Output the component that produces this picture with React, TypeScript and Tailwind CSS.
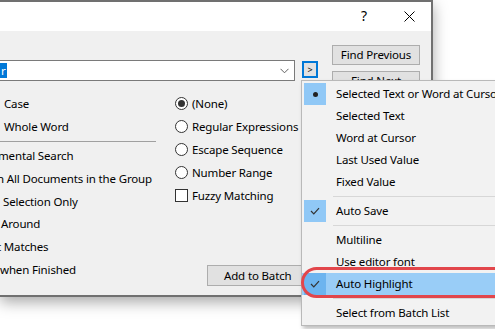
import React from 'react';

const Radio = ({ checked }: { checked?: boolean }) => (
  <span className="w-[13px] h-[13px] rounded-full border border-[#333] bg-white flex items-center justify-center shrink-0">
    {checked && <span className="w-[7px] h-[7px] rounded-full bg-[#333]" />}
  </span>
);

const Check = () => (
  <svg width="10" height="8" viewBox="0 0 10 8">
    <path d="M1 4 L3.8 6.8 L9 1.2" fill="none" stroke="#333" strokeWidth="1.2" />
  </svg>
);

const MenuItem = ({
  label,
  mark,
  hover,
}: {
  label: string;
  mark?: 'dot' | 'check';
  hover?: boolean;
}) => (
  <div className={`h-[22px] flex items-center ${hover ? 'bg-[#99cdf7]' : ''}`}>
    <div
      className={`w-[22px] h-[22px] ml-[2px] flex items-center justify-center ${
        mark ? (hover ? 'bg-[#6cb4ef]' : 'bg-[#90c8f6]') : ''
      }`}
    >
      {mark === 'dot' && <span className="w-[5px] h-[5px] rounded-full bg-[#222]" />}
      {mark === 'check' && <Check />}
    </div>
    <span className="ml-[10px] whitespace-nowrap">{label}</span>
  </div>
);

const Sep = () => (
  <div className="h-[7px] flex items-center pl-[31px]">
    <div className="h-px flex-1 bg-[#d7d7d7]" />
  </div>
);

export default function App() {
  return (
    <div className="relative w-[495px] h-[329px] bg-white overflow-hidden font-['Noto_Sans',sans-serif] text-[11.5px] tracking-[-0.15px] text-black">
      {/* Dialog */}
      <div className="w-[433px] h-[297px] flex flex-col border-t-2 border-r-2 border-b-2 border-[#707070] shadow-[0_5px_14px_rgba(0,0,0,0.35)]">
        {/* Title bar */}
        <div className="h-[29px] bg-white flex items-center justify-end">
          <span className="text-[14px] mr-[37px] mt-[-2px]">?</span>
          <svg width="11" height="11" viewBox="0 0 11 11" className="mr-[16px]">
            <path d="M0.5 0.5 L10.5 10.5 M10.5 0.5 L0.5 10.5" stroke="#000" strokeWidth="1" />
          </svg>
        </div>

        {/* Client area */}
        <div className="flex-1 bg-[#f0f0f0] flex">
          <div className="w-[320px] pt-[29px] flex flex-col">
            {/* Combo row */}
            <div className="flex items-start">
              <div className="w-[295px] h-[21px] bg-white border-y border-r border-[#7a7a7a] flex items-center">
                <span className="bg-[#0078d7] text-white h-[15px] leading-[15px] px-[1px]">r</span>
                <div className="flex-1" />
                <svg width="9" height="6" viewBox="0 0 9 6" className="mr-[5px]">
                  <path d="M0.5 0.8 L4.5 4.8 L8.5 0.8" fill="none" stroke="#606060" strokeWidth="1" />
                </svg>
              </div>
              <div className="ml-[7px] mt-px w-[16px] h-[17px] border-2 border-[#0078d7] bg-[#e1e1e1] flex items-center justify-center text-[9px] leading-none">
                &gt;
              </div>
            </div>

            {/* Options */}
            <div className="flex mt-[11px]">
              <div className="w-[175px] flex flex-col">
                <div className="h-[23px] flex items-center pl-[4px]">Case</div>
                <div className="h-[23px] flex items-center pl-[4px]">Whole Word</div>
                <div className="h-[7px] flex items-center">
                  <div className="w-[156px] h-px bg-[#a0a0a0]" />
                </div>
                <div className="h-[22px] flex items-center whitespace-nowrap">
                  <span className="-ml-[2px]">mental Search</span>
                </div>
                <div className="h-[23px] flex items-center whitespace-nowrap">
                  <span className="-ml-[3px]">n All Documents in the Group</span>
                </div>
                <div className="h-[23px] flex items-center pl-[3px]">Selection Only</div>
                <div className="h-[22px] flex items-center pl-px">Around</div>
                <div className="h-[23px] flex items-center whitespace-nowrap">
                  <span className="-ml-[3px]">t Matches</span>
                </div>
                <div className="h-[23px] flex items-center">when Finished</div>
              </div>

              <div className="flex-1 flex flex-col">
                {[
                  { label: '(None)', checked: true },
                  { label: 'Regular Expressions' },
                  { label: 'Escape Sequence' },
                  { label: 'Number Range' },
                ].map((r) => (
                  <div key={r.label} className="h-[23px] flex items-center gap-[4px]">
                    <Radio checked={r.checked} />
                    <span className="whitespace-nowrap">{r.label}</span>
                  </div>
                ))}
                <div className="h-[23px] flex items-center gap-[4px]">
                  <span className="w-[13px] h-[13px] border border-[#333] bg-white shrink-0" />
                  <span className="whitespace-nowrap">Fuzzy Matching</span>
                </div>
                <div className="mt-[58px] ml-[32px] w-[95px] h-[21px] border border-[#adadad] bg-[#e1e1e1] flex items-center pl-[16px] whitespace-nowrap">
                  Add to Batch
                </div>
              </div>
            </div>
          </div>

          {/* Button column */}
          <div className="ml-[12px] pt-[14px] w-[88px] flex flex-col gap-[6px]">
            <div className="h-[20px] border border-[#adadad] bg-[#e1e1e1] flex items-center justify-center">
              Find Previous
            </div>
            <div className="h-[20px] border border-[#adadad] bg-[#e1e1e1] flex items-center justify-center">
              Find Next
            </div>
          </div>
        </div>
      </div>

      {/* Drop-down menu */}
      <div className="absolute left-[301px] top-[80px] w-[230px] h-[246px] bg-[#f2f2f2] border border-[#b9b9b9] shadow-[2px_3px_4px_rgba(0,0,0,0.25)] pt-[2px]">
        <MenuItem label="Selected Text or Word at Cursor" mark="dot" />
        <MenuItem label="Selected Text" />
        <MenuItem label="Word at Cursor" />
        <MenuItem label="Last Used Value" />
        <MenuItem label="Fixed Value" />
        <Sep />
        <MenuItem label="Auto Save" mark="check" />
        <Sep />
        <MenuItem label="Multiline" />
        <MenuItem label="Use editor font" />
        <MenuItem label="Auto Highlight" mark="check" hover />
        <Sep />
        <MenuItem label="Select from Batch List" />
      </div>

      {/* Red annotation ring */}
      <div className="absolute left-[301px] top-[267px] w-[240px] h-[31px] rounded-full border-[3px] border-[#e2464b]" />
    </div>
  );
}
